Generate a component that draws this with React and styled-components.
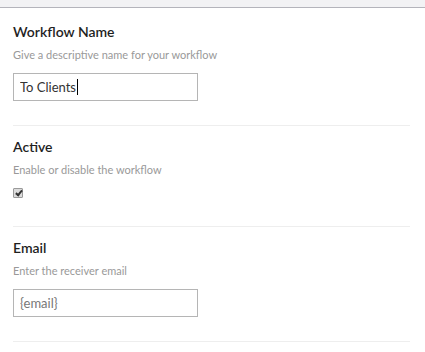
import React from "react";
import styled, { createGlobalStyle } from "styled-components";

const Global = createGlobalStyle`
  html, body { margin: 0; padding: 0; background: #fff; }
  body { font-family: Lato, "Open Sans", sans-serif; }
`;

const Page = styled.div`
  width: 425px;
  height: 352px;
  overflow: hidden;
  background: #fff;
`;

const TopBar = styled.div`
  height: 7px;
  background: #f2f2f4;
  border-bottom: 1px solid #b4b4bb;
`;

const Form = styled.div`
  padding: 3px 15px 0 13px;
`;

const Section = styled.div`
  padding: 13px 0 24px;
  border-bottom: 1px solid #eeeeee;
`;

const Title = styled.div`
  font-size: 14px;
  line-height: 1.2;
  font-weight: 600;
  color: #1f1f1f;
  margin-bottom: 7px;
`;

const Desc = styled.div`
  font-size: 11px;
  line-height: 1.2;
  color: #999;
  margin-bottom: 12px;
`;

const Field = styled.div`
  position: relative;
  width: 185px;
`;

const TextInput = styled.input`
  display: block;
  box-sizing: border-box;
  width: 185px;
  height: 28px;
  margin: 0;
  padding: 0 6px;
  border: 1px solid #b5b5b5;
  border-radius: 0;
  font-family: Lato, "Open Sans", sans-serif;
  font-size: 13px;
  color: #333;
  background: #fff;
  outline: none;
  &::placeholder { color: #777; }
`;

const Caret = styled.span`
  position: absolute;
  left: 64px;
  top: 6px;
  width: 1px;
  height: 16px;
  background: #000;
  pointer-events: none;
`;

const Check = styled.input`
  appearance: none;
  display: block;
  box-sizing: border-box;
  width: 10px;
  height: 10px;
  margin: 2px 0 4px 0;
  border: 1px solid #9a9a9a;
  background: #dcdcdc;
  border-radius: 1px;
  position: relative;
  &:checked::after {
    content: "";
    position: absolute;
    left: 2.5px;
    top: 0px;
    width: 2px;
    height: 5px;
    border-right: 2px solid #333;
    border-bottom: 2px solid #333;
    transform: rotate(40deg);
  }
`;

export default function App() {
  return (
    <Page>
      <Global />
      <TopBar />
      <Form>
        <Section>
          <Title>Workflow Name</Title>
          <Desc>Give a descriptive name for your workflow</Desc>
          <Field>
            <TextInput defaultValue="To Clients" />
            <Caret />
          </Field>
        </Section>
        <Section>
          <Title>Active</Title>
          <Desc>Enable or disable the workflow</Desc>
          <Check type="checkbox" defaultChecked />
        </Section>
        <Section>
          <Title>Email</Title>
          <Desc>Enter the receiver email</Desc>
          <TextInput placeholder="{email}" />
        </Section>
      </Form>
    </Page>
  );
}
